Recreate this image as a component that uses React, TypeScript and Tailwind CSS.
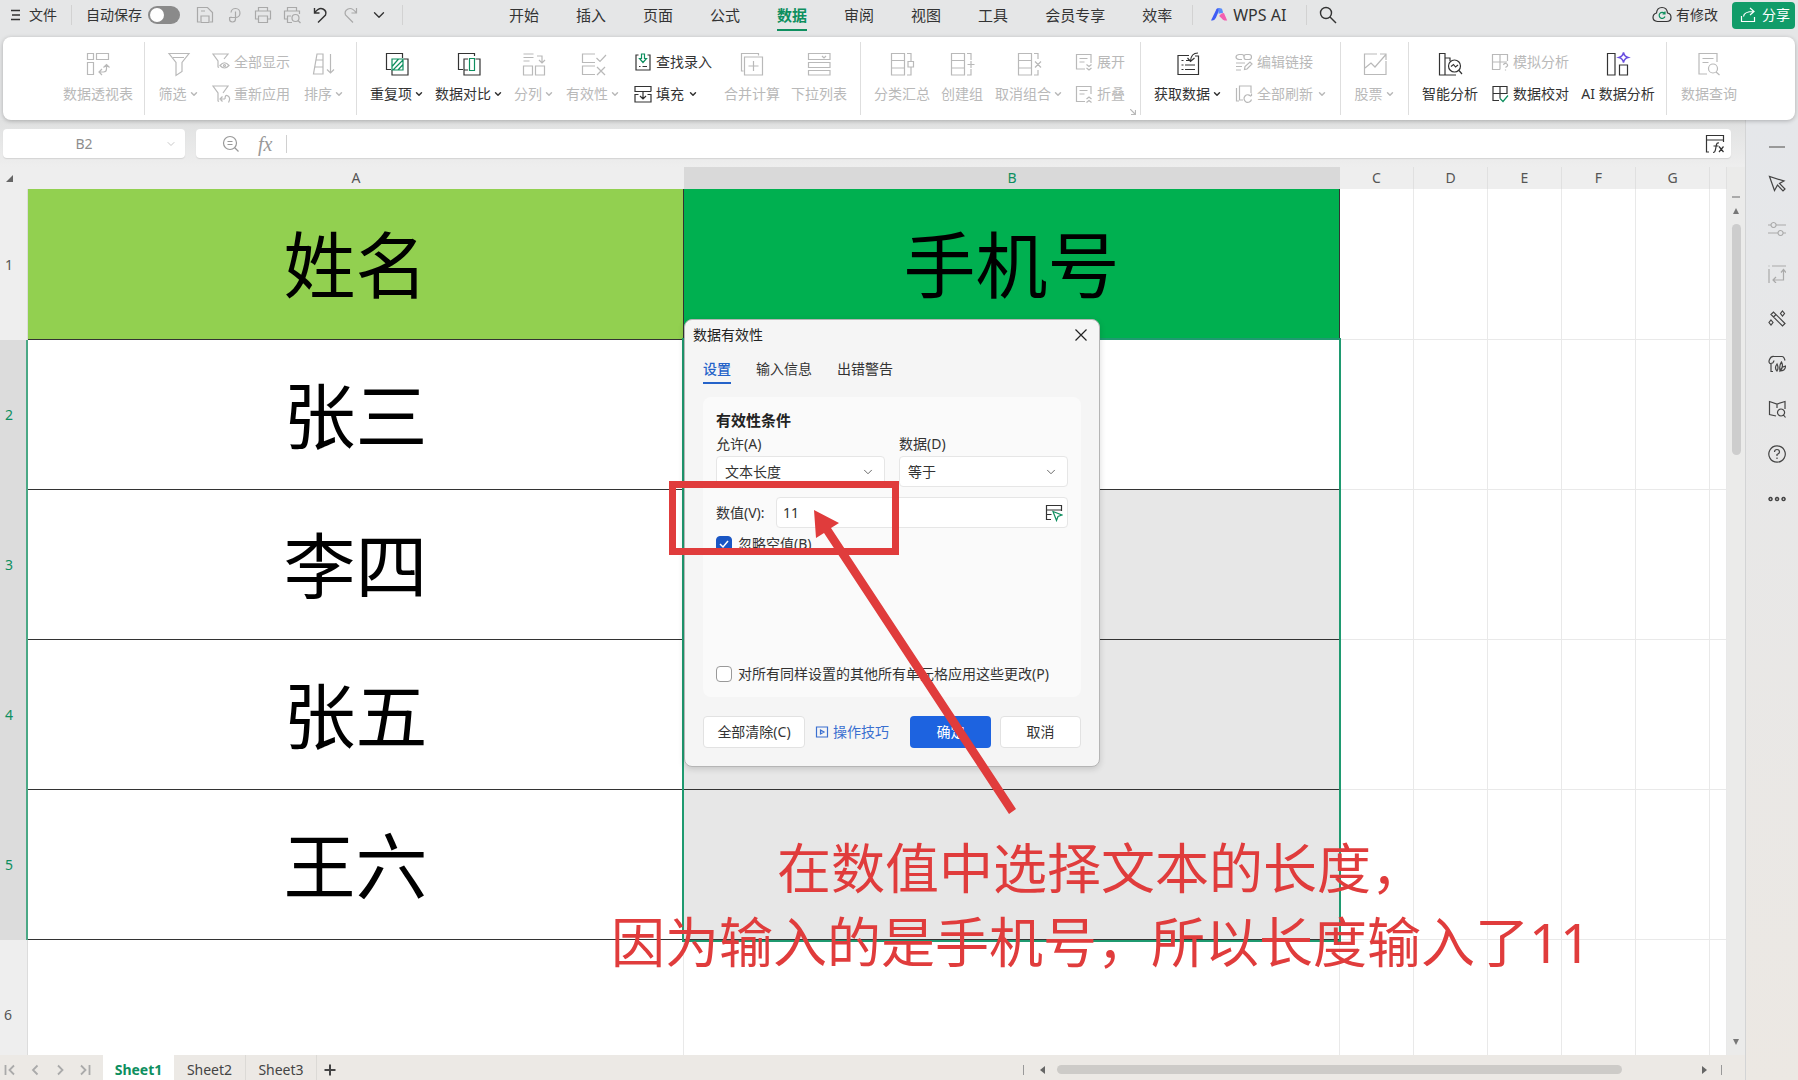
import React, { useState } from "react";
import { ChevronDown } from "lucide-react";

const GREEN = "#0e8f5f";

type IconProps = { children: React.ReactNode; size?: number; className?: string };

/* Thin line icon, every drawing below uses this frame */
const Icon = ({ children, size = 24, className = "" }: IconProps) => (
    <svg
        width={size}
        height={size}
        viewBox={`0 0 ${size} ${size}`}
        fill="none"
        stroke="currentColor"
        strokeWidth="1.2"
        className={`shrink-0 ${className}`}
        aria-hidden="true"
    >
        {children}
    </svg>
);

const icons = {
    pivot: <path d="M1.5 1.5h6v6h-6zM10.5 1.5h12v6h-12zM1.5 10.5h6v12h-6zM13 20h4.5q3 0 3-3v-4M16 17l-3 3 3 3M17.5 15.5l3-3 3 3" />,
    filter: <path d="M2 1.5h20l-7 9v9l-6 4v-13zM6 5.5h11" />,
    sort: <path d="M5 2h6v20H1.5zM4 8h7M3 15h8M18.5 2v19M15 17.5l3.5 3.5 3.5-3.5" />,
    duplicate: (
        <>
            <path d="M6 17.5H1.5v-16h16V6M18.5 7H23v16H7v-5" />
            <path d="M7 7h11v11H7zM7.5 14l6-7M8 18L18 8M13 18l5-5.5" stroke={GREEN} />
        </>
    ),
    compare: (
        <>
            <path d="M6 17.5H1.5v-16h16V4M18.5 7H23v16H7v-5M11 7H7v11h4" />
            <path d="M12.5 6.5h5v12h-5z" stroke={GREEN} />
        </>
    ),
    split: <path d="M1.5 2h10M1.5 5.5h10M1.5 9h6M15 4h5v6M17 8l3 3 3-3M1.5 14h9v9h-9zM13.5 14h9v9h-9z" />,
    validity: <path d="M14 2H1.5v8.5H14M14 14H1.5v8.5H14M15.5 6l3.5 3.5L25 3M16 15l8 8M24 15l-8 8" />,
    consolidate: <path d="M3.5 19h-2V1.5h17v2M4.5 5h18v18h-18zM13.5 9v10M8.5 14h10" />,
    dropList: <path d="M1.5 1.5h21.5v6H1.5zM1.5 10.5h21.5v5H1.5zM1.5 18.5h21.5v4.5H1.5zM15 4l2 2 2-2" />,
    subtotal: <path d="M1.5 1.5h13v21.5h-13zM1.5 8.5h13M1.5 16h13M17 1.5h4V9M21 15v8h-4M18 9.5h5.5V15H18z" />,
    group: <path d="M1.5 1.5h13v21.5h-13zM1.5 8.5h13M1.5 16h13M17 1.5h4V8M21 17v6h-4M21 9v7M17.5 12.5h7" />,
    ungroup: <path d="M1.5 1.5h13v21.5h-13zM1.5 8.5h13M1.5 16h13M17 1.5h4V7M21 18v5h-4M18 9.5l6 6M24 9.5l-6 6" />,
    getData: <path d="M13 3.5H2v19h20.5V4H19M5.5 8.5h2M10 8.5h3M5.5 13h2M9 13h10M5.5 17.5h2M9 17.5h10M22 1q-7 0-7.5 8M11.5 6l3 3.5L18.5 6" />,
    stock: <path d="M14 2H1.5v20.5H23V9M2 16l6-5 4 4L22.5 3M17 2h6v6" />,
    smart: (
        <>
            <path d="M1.5 1.5H7v21.5H1.5zM7 6h5v3M7 23h11" />
            <circle cx="16.5" cy="14" r="6" />
            <path d="M21 18.5l3 3.5M13 14.5l2.5-2 2 2.5 2.5-2" />
        </>
    ),
    aiData: (
        <>
            <path d="M1.5 1.5h7.5v21.5H1.5zM13.5 13h8v10h-8z" />
            <path d="M17.5.5q.8 4 4.5 5-3.7 1-4.5 5-.8-4-4.5-5 3.7-1 4.5-5z" stroke="#6a4fe0" strokeWidth="1.5" />
        </>
    ),
    query: (
        <>
            <path d="M10 22H2V1.5h18V10M5.5 6.5h11M5.5 10.5h6" />
            <circle cx="16" cy="16.5" r="4.5" />
            <path d="M19 20l3.5 3" />
        </>
    ),
};

const smallIcons = {
    showAll: (
        <>
            <path d="M7 14.5l-1-.5V8L1 1h15l-4 5" />
            <path d="M8 12.5q4.5-5.5 9 0-4.5 5-9 0z" />
            <circle cx="12.5" cy="12.5" r="1" />
        </>
    ),
    reapply: <path d="M7 16.5L6 16V8L1 1h15l-5 7M9 14h4M10.5 11.5L8 14l2.5 2.5M13 14q0-5 3-3t.5 6.5" />,
    lookup: (
        <>
            <path d="M4.5 2H2v15h14V2h-2.5M5 13.5h1.5M8.5 13.5H13" />
            <path d="M7.500 1h3v4.500h2L9 9.500 5.500 5.500h2z" stroke={GREEN} />
        </>
    ),
    fill: <path d="M17 6.5v-5H1v5h16M4.500 9.500H1V17h16V9.500h-3.500M9 6.500V14M6 11l3 3 3-3" />,
    expand: <path d="M10 16H1.5V1.5H16V10M4.5 5.5h8M4.5 9h5M11.5 11.5l2.5 2 2.5-2M11.5 15l2.5 2 2.5-2" />,
    collapse: <path d="M10 16.5H1.5v-15H16V9M4.5 5.5h8M4.5 9h5M11.5 14l2.5-2 2.5 2M11.5 17.5l2.5-2 2.5 2" />,
    editLink: <path d="M7 6.5H4Q1 6 1 4t3-2.500h3q2 0 2 2.500M9 4q0 2.500 2 2.500h3q2.500 0 2.500-2.500T14 1.500h-3Q9 1.500 9 4M1 10h9M1 13.500h6M1 17h5M9.500 16.500l.5-3L15 9l2 2-5 5z" />,
    refresh: (
        <>
            <path d="M4 16H1.5V3M8 15H4.5V1H16v7" />
            <path d="M16.5 11V8.500M16 11.500a3.800 3.800 0 1 0 .5 3" />
        </>
    ),
    simulate: <path d="M9 16.5H1.5v-15h15V8M1.5 9H16M9 1.5v15M12.5 12q.5-2 2.500-1.500t1.500 2.500l-2 1.500M14.500 16.500v1" />,
    proof: (
        <>
            <path d="M8 15.5H2v-14h14V9M2 8.500h14M9 1.500v12" />
            <path d="M9 13.500l3 3 5-6" stroke={GREEN} />
        </>
    ),
};

const Caret = () => <ChevronDown size={10} strokeWidth={3.5} className="shrink-0" />;

type ToolProps = { icon: React.ReactNode; label: string; width: string; on?: boolean; caret?: boolean };

/* Large ribbon button: drawing above, caption below */
const Tool = ({ icon, label, width, on, caret }: ToolProps) => (
    <button
        type="button"
        className={`flex shrink-0 flex-col items-center gap-2 ${width} ${on ? "text-[#333]" : "text-[#b9b9b9]"}`}
    >
        <Icon className="overflow-visible">{icon}</Icon>
        <span className="flex items-center gap-0.5 whitespace-nowrap leading-5">
            {label}
            {caret && <Caret />}
        </span>
    </button>
);

/* Small ribbon button: drawing and caption on one line */
const MiniTool = ({ icon, label, on, caret }: Omit<ToolProps, "width">) => (
    <button
        type="button"
        className={`flex items-center gap-1 whitespace-nowrap leading-5 ${on ? "text-[#333]" : "text-[#b9b9b9]"}`}
    >
        <Icon size={18} className="overflow-visible">{icon}</Icon>
        {label}
        {caret && <Caret />}
    </button>
);

const Stack = ({ width, children }: { width: string; children: React.ReactNode }) => (
    <div className={`flex shrink-0 flex-col gap-3 ${width}`}>{children}</div>
);

const Group = ({ children, className }: { children: React.ReactNode; className: string }) => (
    <div className={`flex shrink-0 border-r border-[#dedede] pt-[10px] ${className}`}>{children}</div>
);

const menuTabs = ["开始", "插入", "页面", "公式", "数据", "审阅", "视图", "工具", "会员专享", "效率"];

const Divider = ({ className = "" }: { className?: string }) => (
    <span className={`h-5 w-px shrink-0 bg-[#d2d2d2] ${className}`} />
);

function TopBar() {
    const [autoSave, setAutoSave] = useState(false);

    return (
        <header className="flex h-[37px] items-center pb-[7px] text-[#333]">
            <button type="button" className="ml-2.5 flex items-center gap-[7px]">
                <Icon size={12}>
                    <path d="M1 1.5h9M2 6h8M1 10.5h9" strokeWidth="1.4" />
                </Icon>
                文件
            </button>
            <Divider className="ml-3.5 mr-3.5" />
            <label className="flex items-center gap-1.5">
                自动保存
                <input
                    type="checkbox"
                    checked={autoSave}
                    onChange={(e) => setAutoSave(e.target.checked)}
                    className="h-[18px] w-8 appearance-none rounded-full bg-[#8a8a8a] p-0.5 before:block before:size-3.5 before:rounded-full before:bg-white checked:bg-[#0e8f5f] checked:before:translate-x-3.5"
                />
            </label>
            <div className="ml-4 flex items-center gap-[11px] text-[#a9a9a9]">
                <button type="button" aria-label="保存">
                    <Icon size={18}><path d="M4 16H1.5V1.5h10l5 5V16H14M5 5h4M5 16.5V10h8v6.5z" /></Icon>
                </button>
                <button type="button" aria-label="输出">
                    <Icon size={18}><path d="M6 6.500a4.500 4.500 0 1 1 4.500 5H4M10.500 5.500v7.500a3 3 0 0 1-6 0q0-2 2-2" /></Icon>
                </button>
                <button type="button" aria-label="打印">
                    <Icon size={18}><path d="M4.5 5V1.5h9V5M4 13H1.5V5h15v8H14M4.5 10h9v6.5h-9z" /></Icon>
                </button>
                <button type="button" aria-label="打印预览">
                    <Icon size={18}>
                        <path d="M4.5 5V1.5h9V5M4 13H1.5V5h15v3M8 10H4.5v6.5H9" />
                        <circle cx="12.5" cy="12" r="3.5" />
                        <path d="M15 14.5l2.5 2.5" />
                    </Icon>
                </button>
                <button type="button" aria-label="撤销" className="text-[#333]">
                    <Icon size={18}><path d="M2.5 2v5h5M2.5 7Q7 1 11 3t2.5 6L6 16.5" strokeWidth="1.4" /></Icon>
                </button>
                <button type="button" aria-label="恢复">
                    <Icon size={18}><path d="M15.5 2v5h-5M15.5 7Q11 1 7 3T4.5 9l7.5 7.5" /></Icon>
                </button>
                <button type="button" aria-label="更多" className="text-[#333]">
                    <ChevronDown size={18} strokeWidth={1.8} />
                </button>
            </div>
            <Divider className="ml-3.5" />

            <nav className="ml-[106px] flex gap-[37px] text-[15px]">
                {menuTabs.map((tab) => (
                    <button
                        key={tab}
                        type="button"
                        className={
                            tab === "数据"
                                ? "relative font-bold leading-5 text-[#0e8f5f] after:absolute after:inset-x-0 after:-bottom-1.5 after:h-0.5 after:bg-[#0e8f5f]"
                                : "leading-5"
                        }
                    >
                        {tab}
                    </button>
                ))}
            </nav>
            <Divider className="ml-5 mr-[18px]" />
            <button type="button" className="flex items-center gap-1 text-base">
                <svg width="18" height="16" viewBox="0 0 20 16" aria-hidden="true">
                    <path d="M0 14L6 1.5Q6.500.5 7.500.5H10L5.500 11Q4 14 1.500 14z" fill="#3f5cf5" />
                    <path d="M8 .5h2.500q1.500 0 2 1.500l1 3.500-5 1z" fill="#5b8df9" />
                    <path d="M9 9q3-4 5.500-3L18 14h-3q-2 0-3-2z" fill="#f35fb0" />
                </svg>
                WPS AI
            </button>
            <Divider className="ml-5 mr-3" />
            <button type="button" aria-label="搜索">
                <Icon size={18}>
                    <circle cx="7" cy="7" r="5.5" strokeWidth="1.4" />
                    <path d="M11 11l6 6" strokeWidth="1.4" />
                </Icon>
            </button>

            <button type="button" className="ml-auto flex items-center gap-1">
                <Icon size={20}>
                    <path d="M5.500 16.500Q1 16 1 12.500T4.500 8Q5 2.500 10 2.500T15.500 8Q19 8.500 19 12.500t-4.500 4z" />
                    <path d="M12.500 8.500a3 3 0 1 0 .5 3M13 6.500V9h-2.500" stroke={GREEN} />
                </Icon>
                有修改
            </button>
            <button
                type="button"
                className="ml-3.5 mr-[3px] flex h-[27px] w-[63px] items-center gap-1.5 rounded bg-[#119c69] pl-2 text-white"
            >
                <Icon size={16}><path d="M1.5 9v5.5h13V10M3.5 9.5Q4 4.500 13.500 4.500M10 1l4 3.500L10 8" /></Icon>
                分享
            </button>
        </header>
    );
}

function Ribbon() {
    return (
        <div className="relative z-10 mx-[3px] flex h-[83px] overflow-hidden rounded-lg bg-white py-[5px] shadow-[0_1px_4px_rgba(0,0,0,0.25)]">
            <Group className="w-[142px] pl-12">
                <Tool icon={icons.pivot} label="数据透视表" width="w-[94px]" />
            </Group>
            <Group className="w-[212px]">
                <Tool icon={icons.filter} label="筛选" width="w-[67px]" caret />
                <Stack width="w-[82px]">
                    <MiniTool icon={smallIcons.showAll} label="全部显示" />
                    <MiniTool icon={smallIcons.reapply} label="重新应用" />
                </Stack>
                <Tool icon={icons.sort} label="排序" width="w-[60px]" caret />
            </Group>
            <Group className="w-[504px] pl-2">
                <Tool icon={icons.duplicate} label="重复项" width="w-16" on caret />
                <Tool icon={icons.compare} label="数据对比" width="w-20" on caret />
                <Tool icon={icons.split} label="分列" width="w-[50px]" caret />
                <Tool icon={icons.validity} label="有效性" width="w-[68px]" caret />
                <Stack width="w-[90px] pl-[7px]">
                    <MiniTool icon={smallIcons.lookup} label="查找录入" on />
                    <MiniTool icon={smallIcons.fill} label="填充" on caret />
                </Stack>
                <Tool icon={icons.consolidate} label="合并计算" width="w-[70px]" />
                <Tool icon={icons.dropList} label="下拉列表" width="w-16" />
            </Group>
            <Group className="relative w-[280px] pl-[9px]">
                <Tool icon={icons.subtotal} label="分类汇总" width="w-16" />
                <Tool icon={icons.group} label="创建组" width="w-14" />
                <Tool icon={icons.ungroup} label="取消组合" width="w-[78px]" caret />
                <Stack width="w-[60px] pl-[7px]">
                    <MiniTool icon={smallIcons.expand} label="展开" />
                    <MiniTool icon={smallIcons.collapse} label="折叠" />
                </Stack>
                <Icon size={6} className="absolute bottom-0 right-1 text-[#b9b9b9]">
                    <path d="M0 0l5 5M5.5 1v4.5H1" />
                </Icon>
            </Group>
            <Group className="w-[200px] pl-[5px]">
                <Tool icon={icons.getData} label="获取数据" width="w-[84px]" on caret />
                <Stack width="w-[100px] pl-[5px]">
                    <MiniTool icon={smallIcons.editLink} label="编辑链接" />
                    <MiniTool icon={smallIcons.refresh} label="全部刷新" caret />
                </Stack>
            </Group>
            <Group className="w-[68px]">
                <Tool icon={icons.stock} label="股票" width="w-[67px]" caret />
            </Group>
            <Group className="w-[258px] pl-2">
                <Tool icon={icons.smart} label="智能分析" width="w-[66px]" on />
                <Stack width="w-[92px] pl-[8px]">
                    <MiniTool icon={smallIcons.simulate} label="模拟分析" />
                    <MiniTool icon={smallIcons.proof} label="数据校对" on />
                </Stack>
                <Tool icon={icons.aiData} label="AI 数据分析" width="w-[86px]" on />
            </Group>
            <div className="flex flex-1 pl-[10px] pt-[10px]">
                <Tool icon={icons.query} label="数据查询" width="w-16" />
            </div>
        </div>
    );
}

function FormulaBar() {
    return (
        <div className="flex h-[47px] items-start gap-[11px] bg-gradient-to-b from-[#e0e1e1] to-[#eeeeee] pl-[3px] pr-[14px] pt-[9px]">
            <div className="flex h-[29px] w-[182px] items-center rounded bg-white pr-2 shadow-[0_1px_1px_#d4d4d4]">
                <input
                    aria-label="名称框"
                    defaultValue="B2"
                    className="min-w-0 flex-1 text-center text-[#8e8e8e] outline-none"
                />
                <ChevronDown size={12} className="text-[#c9c9c9]" />
            </div>
            <div className="flex h-[29px] min-w-0 flex-1 items-center rounded bg-white pl-[26px] pr-1.5 text-[#999] shadow-[0_1px_1px_#d4d4d4]">
                <Icon size={18}>
                    <circle cx="8" cy="8" r="6.5" />
                    <path d="M12.5 12.5l4 4M5.5 6.5h5M5.5 9.5h5" />
                </Icon>
                <span className="ml-[18px] font-['Liberation_Serif',serif] text-xl italic leading-5">fx</span>
                <span className="ml-3.5 h-[18px] w-px bg-[#d0d0d0]" />
                <input aria-label="编辑栏" className="min-w-0 flex-1 px-2 text-[#333] outline-none" />
                <button type="button" aria-label="函数" className="text-[#333]">
                    <Icon size={20}>
                        <path d="M4 18H1.5V1.5h17V8M1.5 6h17" />
                        <path d="M8 18.5q2 0 2.5-3l1-5q.5-2 2.500-1.500M8.500 12h5M14 12.500l4.500 5.500M18.500 12.500L14 18" />
                    </Icon>
                </button>
            </div>
        </div>
    );
}

const rows = [
    { name: "姓名", phone: "手机号" },
    { name: "张三", phone: "" },
    { name: "李四", phone: "" },
    { name: "张五", phone: "" },
    { name: "王六", phone: "" },
];

const emptyCols = ["C", "D", "E", "F", "G", ""];

function Sheet() {
    const lightCell = "border-b border-r border-[#e9e9e9]";

    return (
        <table className="w-full table-fixed border-separate border-spacing-0 bg-white">
            <colgroup>
                <col className="w-7" />
                <col className="w-[656px]" />
                <col className="w-[656px]" />
                <col className="w-[74px]" />
                <col className="w-[74px]" />
                <col className="w-[74px]" />
                <col className="w-[74px]" />
                <col className="w-[74px]" />
                <col />
            </colgroup>
            <thead>
                <tr className="h-[22px] bg-[#eeeeee] leading-5 text-[#555]">
                    <th className="p-0">
                        <svg width="7" height="7" viewBox="0 0 7 7" className="ml-1.5" aria-hidden="true">
                            <path d="M7 0v7H0z" fill="#666" />
                        </svg>
                    </th>
                    <th className="p-0 font-normal">A</th>
                    <th className="bg-[#d9d9d9] p-0 font-normal text-[#0e8f5f]">B</th>
                    {emptyCols.map((col) => (
                        <th key={col} className="border-r border-[#e0e0e0] p-0 font-normal">{col}</th>
                    ))}
                </tr>
            </thead>
            <tbody>
                {rows.map((row, i) => (
                    <tr key={row.name} className={i === 0 ? "h-[151px]" : "h-[150px]"}>
                        <th
                            className={`p-0 pl-[5px] text-left font-normal ${
                                i === 0
                                    ? "border-r border-[#dcdcdc] bg-[#eeeeee] text-[#555]"
                                    : "border-r-2 border-[#4aa885] bg-[#dcdcdc] text-[#0e8f5f]"
                            }`}
                        >
                            {i + 1}
                        </th>
                        <td
                            className={`border-b border-r border-[#333] p-0 text-center text-[72px] leading-none text-black ${
                                i === 0 ? "bg-[#92d050]" : "bg-white"
                            }`}
                        >
                            {row.name}
                        </td>
                        <td
                            className={`relative border-b border-r border-[#333] p-0 text-center text-[72px] leading-none text-black ${
                                i === 0 ? "bg-[#00b050]" : i === 1 ? "bg-white" : "bg-[#e7e7e7]"
                            }`}
                        >
                            {row.phone}
                            {/* Selection frame over B2:B5 */}
                            {i === 1 && (
                                <span className="pointer-events-none absolute -left-0.5 -right-0.5 -top-0.5 z-10 h-[604px] border-2 border-[#1f9a70]" />
                            )}
                        </td>
                        {emptyCols.map((col) => (
                            <td key={col} className={lightCell} />
                        ))}
                    </tr>
                ))}
                <tr className="h-[150px]">
                    <th className="border-r border-[#dcdcdc] bg-[#eeeeee] p-0 pl-1 text-left font-normal text-[#555]">6</th>
                    <td className={lightCell} />
                    <td className={lightCell} />
                    {emptyCols.map((col) => (
                        <td key={col} className={lightCell} />
                    ))}
                </tr>
            </tbody>
        </table>
    );
}

const VerticalScroll = () => (
    <div className="flex w-[18px] shrink-0 flex-col items-center bg-[#ebebea] pt-[29px] text-[#777]">
        <span className="h-0.5 w-2 bg-[#aaa]" />
        <span className="mt-2.5 border-x-[3px] border-b-[6px] border-x-transparent border-b-[#777]" />
        <span className="mt-2.5 h-[231px] w-[9px] rounded-full bg-[#cdcdcd]" />
        <span className="mb-2.5 mt-auto border-x-[3px] border-t-[6px] border-x-transparent border-t-[#777]" />
    </div>
);

function SheetTabs() {
    return (
        <footer className="flex h-[25px] items-stretch bg-[#ece9e5] text-[#444]">
            <div className="flex w-[103px] items-center gap-[13px] pl-1 pt-1 text-[#aaa]">
                <Icon size={12}><path d="M1.5 1v10M10 1.5L5.5 6l4.5 4.5" strokeWidth="1.8" /></Icon>
                <Icon size={12}><path d="M8.5 1.5L4 6l4.5 4.5" strokeWidth="1.8" /></Icon>
                <Icon size={12}><path d="M4 1.5L8.5 6 4 10.5" strokeWidth="1.8" /></Icon>
                <Icon size={12}><path d="M2 1.5L6.5 6 2 10.5M10.5 1v10" strokeWidth="1.8" /></Icon>
            </div>
            <button type="button" className="w-[71px] bg-white pt-1 font-bold text-[#0e8f5f]">Sheet1</button>
            <button type="button" className="w-[72px] border-r border-[#dcdad6] pt-1">Sheet2</button>
            <button type="button" className="w-[71px] border-r border-[#dcdad6] pt-1">Sheet3</button>
            <button type="button" aria-label="新建工作表" className="pl-[7px] pt-1">
                <Icon size={12}><path d="M6 .5v11M.5 6h11" strokeWidth="2" /></Icon>
            </button>
            <div className="ml-auto flex w-[722px] items-center pr-[23px] pt-1">
                <span className="h-2.5 w-px bg-[#999]" />
                <span className="ml-4 border-y-[4px] border-r-[5px] border-y-transparent border-r-[#666]" />
                <span className="ml-3 h-[9px] w-[565px] rounded-full bg-[#cdcbc8]" />
                <span className="ml-auto border-y-[4px] border-l-[5px] border-y-transparent border-l-[#666]" />
                <span className="ml-3.5 h-2.5 w-px bg-[#999]" />
            </div>
        </footer>
    );
}

const sideTools = [
    { name: "选择", dim: false, art: <path d="M1.5 1.5l5 14 3-5.5 5.500 6 2-2-5.500-5.500L16 6z" /> },
    { name: "属性", dim: true, art: <path d="M0 5h3M8 5h10M0 13h10M15 13h3M5.5 2.500a2.500 2.500 0 1 0 .1 0zM12.500 10.500a2.500 2.500 0 1 0 .1 0z" /> },
    { name: "透视表", dim: true, art: <path d="M4 1h14M1 4v14M.5 1h1M5 15h10.500V5M8 12l-3 3 3 3M13 7.500l2.500-3 2.500 3" /> },
    { name: "美化", dim: false, art: <path d="M3 4.500l2.500-2.500L17 13.500 14.500 16zM5.500 7L8 4.500M14.500 1l2 2.500-2 2.500-2-2.500zM3 10l2 2.500L3 15l-2-2.500z" /> },
    { name: "素材", dim: false, art: <path d="M5 16.5H3V9Q0 8 1.500 4.500 3 1 6 1.500h8q2 0 3 4M2.500 8.500q3 0 3.500-3M9 16Q6 13 9 9q2 4 0 7zM12 16q-1-6 1.500-9 2.500 5-1.500 9zM12 16q1-4 5.500-5 0 5-5.500 5z" /> },
    { name: "查阅", dim: false, art: <path d="M8 16l-6.500-1.500v-13L9 4l8-2.500V9M9 4v4M13 9a3.500 3.500 0 1 0 .1 0zM15.500 15l2 2.500" /> },
    { name: "帮助", dim: false, art: <path d="M9 .8a8.200 8.200 0 1 0 .1 0zM6.500 7q0-2.500 2.500-2.500T11.500 7Q11.500 8.500 9 9.500V11M9 12.500V14" /> },
    { name: "更多", dim: false, art: <path d="M2.500 7.500a1.500 1.500 0 1 0 .1 0zM9 7.500a1.500 1.500 0 1 0 .1 0zM15.500 7.500a1.500 1.500 0 1 0 .1 0z" strokeWidth="1.5" /> },
];

const SidePanel = () => (
    <aside className="flex w-[53px] shrink-0 flex-col items-center border-l border-[#d3d4d5] bg-gradient-to-b from-[#e5e7ea] to-[#ece8e3] pl-2.5 pt-[26px]">
        <span className="mb-[13px] h-0.5 w-4 bg-[#999]" />
        {sideTools.map((tool) => (
            <button
                key={tool.name}
                type="button"
                aria-label={tool.name}
                className={`flex h-[45px] items-center ${tool.dim ? "text-[#aaa]" : "text-[#444]"}`}
            >
                <Icon size={18}>{tool.art}</Icon>
            </button>
        ))}
    </aside>
);

type PickProps = { id: string; label: string; value: string };

const Pick = ({ id, label, value }: PickProps) => (
    <div className="relative flex-1">
        <label htmlFor={id} className="block leading-6">{label}</label>
        <select
            id={id}
            defaultValue={value}
            className="h-[31px] w-full appearance-none rounded border border-[#e6e6e6] bg-white pl-2 leading-5"
        >
            <option>{value}</option>
        </select>
        <ChevronDown size={14} strokeWidth={1.5} className="pointer-events-none absolute bottom-2 right-2.5 text-[#555]" />
    </div>
);

const Check = ({ label, checked }: { label: string; checked?: boolean }) => (
    <label className="relative flex items-center gap-1.5 leading-5">
        <input
            type="checkbox"
            defaultChecked={checked}
            className="peer size-4 appearance-none rounded-sm border border-[#999] bg-white checked:border-[#1a56c4] checked:bg-[#1a56c4]"
        />
        <svg
            width="16"
            height="16"
            viewBox="0 0 16 16"
            className="pointer-events-none absolute left-0 hidden peer-checked:block"
            aria-hidden="true"
        >
            <path d="M4 8l3 3 5-6" fill="none" stroke="#fff" strokeWidth="1.5" />
        </svg>
        {label}
    </label>
);

function ValidityDialog() {
    const button = "h-8 rounded border border-[#e2e2e2] bg-white leading-5";

    return (
        <section
            role="dialog"
            aria-label="数据有效性"
            className="absolute left-[684px] top-[319px] z-20 w-[416px] rounded-lg border border-[#b5b5b5] bg-[#f5f5f5] pb-[18px] text-[#333] shadow-[0_2px_6px_rgba(0,0,0,0.15)]"
        >
            <div className="flex h-[30px] items-center justify-between pl-2 pr-3">
                <h2 className="text-[#222]">数据有效性</h2>
                <button type="button" aria-label="关闭" className="text-[#222]">
                    <Icon size={12}><path d="M.5.5l11 11M11.5.5l-11 11" /></Icon>
                </button>
            </div>
            <div className="flex gap-[25px] px-[18px] pt-[7px]">
                <button type="button" className="border-b-2 border-[#2563c9] pb-px font-medium leading-6 text-[#2563c9]">设置</button>
                <button type="button" className="pb-[3px] leading-6">输入信息</button>
                <button type="button" className="pb-[3px] leading-6">出错警告</button>
            </div>

            <div className="mx-[18px] mt-[13px] flex h-[300px] flex-col rounded-lg bg-[#fafafa] px-[13px] pt-[11px]">
                <h3 className="text-[15px] font-bold leading-6 text-[#222]">有效性条件</h3>
                <div className="flex gap-3.5">
                    <Pick id="allow" label="允许(A)" value="文本长度" />
                    <Pick id="data" label="数据(D)" value="等于" />
                </div>
                <div className="mt-[10px] flex items-center">
                    <label htmlFor="value" className="w-[60px]">数值(V):</label>
                    <div className="flex h-[31px] min-w-0 flex-1 items-center rounded border border-[#e6e6e6] bg-white pl-1.5 pr-1">
                        <input id="value" defaultValue="11" className="min-w-0 flex-1 outline-none" />
                        <button type="button" aria-label="选择区域">
                            <Icon size={18}>
                                <path d="M6 15.5H1.5v-14h15V7M1.5 6h15M1.5 10.5h5" />
                                <path d="M8 7.5l9 3.5-4 1.5-1.500 4z" stroke={GREEN} />
                            </Icon>
                        </button>
                    </div>
                </div>
                <div className="mt-1.5">
                    <Check label="忽略空值(B)" checked />
                </div>
                <div className="mb-[13px] mt-auto">
                    <Check label="对所有同样设置的其他所有单元格应用这些更改(P)" />
                </div>
            </div>

            <div className="flex items-center px-[18px] pt-[19px]">
                <button type="button" className={`w-[102px] ${button}`}>全部清除(C)</button>
                <a href="#tips" className="ml-2.5 flex items-center gap-1 text-[#3a6fd0]">
                    <Icon size={14}><path d="M1.5 2h11v10h-11zM5.500 5L9 7 5.500 9z" /></Icon>
                    操作技巧
                </a>
                <button type="button" className="ml-auto h-8 w-[81px] rounded bg-[#1d63e0] leading-5 text-white">确定</button>
                <button type="button" className={`ml-[9px] w-[81px] ${button}`}>取消</button>
            </div>
        </section>
    );
}

/* Red tutorial marks drawn over the window */
function Callout() {
    return (
        <div className="pointer-events-none text-[#e03c3c]">
            <div className="absolute left-[669px] top-[481px] z-30 h-[74px] w-[230px] border-[7px] border-[#e03c3c]" />
            <svg className="absolute left-[810px] top-[508px] z-30" width="206" height="308" viewBox="810 508 206 308" aria-hidden="true">
                <path d="M814 510l25 13-8 5 185 281-7 5-185-281-8 5z" fill="#e03c3c" />
            </svg>
            <p className="absolute left-[601px] top-[831px] z-30 w-[1000px] text-center text-[54px] leading-[74px]">
                在数值中选择文本的长度，
                <br />
                因为输入的是手机号，所以长度输入了11
            </p>
        </div>
    );
}

export default function App() {
    return (
        <div className="relative flex h-screen flex-col overflow-hidden bg-[#e5e6e7] font-['Noto_Sans','Noto_Sans_CJK_SC',sans-serif] text-sm">
            <TopBar />
            <Ribbon />
            <div className="flex min-h-0 flex-1">
                <main className="flex min-w-0 flex-1 flex-col">
                    <FormulaBar />
                    <div className="flex min-h-0 flex-1">
                        <div className="min-w-0 flex-1 overflow-hidden">
                            <Sheet />
                        </div>
                        <VerticalScroll />
                    </div>
                    <SheetTabs />
                </main>
                <SidePanel />
            </div>
            <ValidityDialog />
            <Callout />
        </div>
    );
}
